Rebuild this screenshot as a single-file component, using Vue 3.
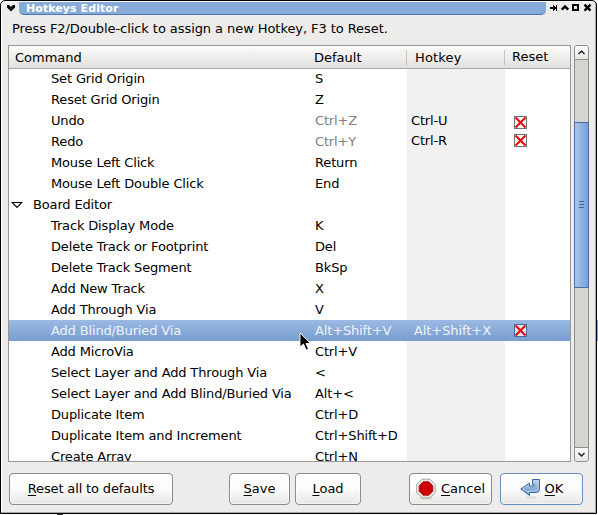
<script setup>
const rows = [
  { name: 'Set Grid Origin', def: 'S' },
  { name: 'Reset Grid Origin', def: 'Z' },
  { name: 'Undo', def: 'Ctrl+Z', key: 'Ctrl-U', changed: true, low: true },
  { name: 'Redo', def: 'Ctrl+Y', key: 'Ctrl-R', changed: true, high: true },
  { name: 'Mouse Left Click', def: 'Return' },
  { name: 'Mouse Left Double Click', def: 'End' },
  { name: 'Board Editor', group: true },
  { name: 'Track Display Mode', def: 'K' },
  { name: 'Delete Track or Footprint', def: 'Del' },
  { name: 'Delete Track Segment', def: 'BkSp' },
  { name: 'Add New Track', def: 'X' },
  { name: 'Add Through Via', def: 'V' },
  { name: 'Add Blind/Buried Via', def: 'Alt+Shift+V', key: 'Alt+Shift+X', selected: true },
  { name: 'Add MicroVia', def: 'Ctrl+V' },
  { name: 'Select Layer and Add Through Via', def: '<' },
  { name: 'Select Layer and Add Blind/Buried Via', def: 'Alt+<' },
  { name: 'Duplicate Item', def: 'Ctrl+D' },
  { name: 'Duplicate Item and Increment', def: 'Ctrl+Shift+D' },
  { name: 'Create Array', def: 'Ctrl+N' },
]
</script>

<template>
  <div class="screen">
    <div class="window">
      <header class="titlebar">
        <svg class="menu" width="18" height="14" viewBox="0 0 18 14"><path d="M6 4h2l2 2 2-2h2v2.500l-4 4-4-4z" fill="#000" /></svg>
        <h1>Hotkeys Editor</h1>
        <svg class="controls" width="50" height="14" viewBox="0 0 50 14">
          <path d="M4 5h3V3h1v1h1v1h1V3h1v6h-1V7H9v1H8v1H7V7H4z" fill="#000" />
          <path d="M15.800 7.700l3.200-3.200 3.200 3.200" fill="none" stroke="#000" stroke-width="2.400" />
          <path d="M27 3h5v5h-5z" fill="none" stroke="#000" stroke-width="2" />
          <path d="M38.500 2.700l6 6M44.500 2.700l-6 6" stroke="#000" stroke-width="2.400" />
        </svg>
      </header>

      <p class="hint">Press F2/Double-click to assign a new Hotkey, F3 to Reset.</p>

      <main class="body">
        <section class="list">
          <div class="head">
            <span class="c-name">Command</span>
            <span class="c-def">Default</span>
            <span class="c-key">Hotkey</span>
            <span class="c-reset">Reset</span>
          </div>
          <div class="rows">
            <div v-for="row in rows" :key="row.name" class="row" :class="{ selected: row.selected, group: row.group, changed: row.changed, low: row.low, high: row.high }">
              <span class="c-name">
                <svg v-if="row.group" class="arrow" width="12" height="8" viewBox="0 0 12 8"><path d="M1.200 1.500h9.600L6 6.500z" fill="#fff" stroke="#000" stroke-width="1.100" /></svg>
                <span>{{ row.name }}</span>
              </span>
              <span class="c-def">{{ row.def }}</span>
              <span class="c-key">{{ row.key }}</span>
              <span class="c-reset">
                <svg v-if="row.key" width="13" height="13" viewBox="0 0 13 13">
                  <rect class="box" x=".5" y=".5" width="12" height="12" />
                  <path d="M1.500 1.500l10 10M11.500 1.500l-10 10" stroke="#f00000" stroke-width="2" />
                </svg>
              </span>
            </div>
          </div>
        </section>

        <div class="scroll">
          <div class="step"><svg width="13" height="13" viewBox="0 0 13 13"><path d="M3.500 8l3-3 3 3" fill="none" stroke="#222" stroke-width="1.500" /></svg></div>
          <div class="track"><div class="thumb"><i /><i /><i /></div></div>
          <div class="step end"><svg width="13" height="13" viewBox="0 0 13 13"><path d="M3.500 5l3 3 3-3" fill="none" stroke="#222" stroke-width="1.500" /></svg></div>
        </div>
      </main>

      <footer class="buttons">
        <button class="b-reset"><span><u>R</u>eset all to defaults</span></button>
        <button class="b-save"><span><u>S</u>ave</span></button>
        <button class="b-load"><span><u>L</u>oad</span></button>
        <button class="b-cancel">
          <svg width="20" height="22" viewBox="0 0 20 22">
            <ellipse cx="10" cy="20.500" rx="7" ry="1.300" fill="#d8d8d8" />
            <path d="M6 1.200h8l5.300 5.300v8L14 19.800H6L.7 14.500v-8z" fill="#e9ebe7" stroke="#a5a9a2" />
            <path d="M7.200 3.700h5.600l4 4v5.600l-4 4H7.200l-4-4V7.700z" fill="#cc0000" stroke="#b00000" stroke-width=".8" stroke-linejoin="round" />
          </svg>
          <span><u>C</u>ancel</span>
        </button>
        <button class="b-ok">
          <svg width="21" height="22" viewBox="0 0 21 22">
            <defs>
              <linearGradient id="enter" x1="0" y1="0" x2="0" y2="1"><stop offset="0" stop-color="#b8d0eb" /><stop offset="1" stop-color="#6594cb" /></linearGradient>
            </defs>
            <ellipse cx="11" cy="19.500" rx="6" ry="1.500" fill="#dedede" />
            <path d="M12.500 1.500h7V11q0 3.500-3.500 3.500H9.500v3L.800 11 9.500 5v3h4.500V6.500h-1.500z" fill="url(#enter)" stroke="#3b6ba5" />
            <path d="M14 3h4v8q0 2-2 2H8.500v1.500L3 11l5.500-4" fill="none" stroke="#c8dcf2" stroke-width=".8" />
          </svg>
          <span><u>O</u>K</span>
        </button>
      </footer>

      <svg class="cursor" width="14" height="20" viewBox="0 0 14 20">
        <path d="M1 1v14l3.500-3 2.500 6 2.500-1-2.500-5.500h4.500z" fill="#000" stroke="#fff" stroke-width=".9" />
      </svg>
    </div>
    <div class="behind"><i /></div>
  </div>
</template>

<style>
body { background: #fff; overflow: hidden; }
</style>

<style scoped>
.screen {
  width: 598px;
  height: 515px;
  box-sizing: border-box;
  overflow: hidden;
  font: 13px/21px "DejaVu Sans", sans-serif;
  color: #000;
  background: linear-gradient(#fff 320px, #7ea4d8 320px, #7ea4d8 341px, #fff 341px);
}
.window {
  position: relative;
  display: flex;
  flex-direction: column;
  width: 597px;
  height: 514px;
  box-sizing: border-box;
  border: 1px solid #000;
  border-radius: 5px 5px 0 0;
  background: #edeceb;
  box-shadow: inset -1px -1px #aaa8a5, inset 1px 1px #fff;
}
.titlebar {
  display: flex;
  height: 15px;
  flex: none;
}
.menu, .controls { flex: none; }
.controls { margin-top: 1px; }
.titlebar h1 {
  flex: 1;
  margin: 1px 0 0;
  padding-left: 7px;
  height: 13px;
  box-sizing: border-box;
  border-bottom: 1px solid #4b76b3;
  border-radius: 0 0 5px 5px;
  background: #86abd9;
  color: #fff;
  font: bold 11px/13px "DejaVu Sans", sans-serif;
  letter-spacing: .07px;
}
.hint { margin: 1px 0 1px; padding-left: 11px; height: 27px; line-height: 23px; flex: none; letter-spacing: -.07px; }
.body { display: flex; gap: 3px; margin-left: 7px; height: 417px; flex: none; }
.list {
  display: flex;
  flex-direction: column;
  width: 563px;
  box-sizing: border-box;
  border: 1px solid #989794;
  background: #fff;
  overflow: hidden;
}
.head {
  display: flex;
  height: 23px;
  flex: none;
  box-sizing: border-box;
  border-bottom: 1px solid #aaa7a4;
  background: linear-gradient(#fbfbfa, #e3e1df);
  line-height: 23px;
}
.rows { flex: 1; overflow: hidden; background: linear-gradient(90deg, transparent 398px, #f1f1f1 398px, #f1f1f1 496px, transparent 496px); }
.row { display: flex; height: 21px; letter-spacing: -.15px; }
.row:first-child { margin-top: -1px; }
.c-name { width: 306px; flex: none; box-sizing: border-box; padding-left: 42px; white-space: nowrap; }
.c-def { width: 92px; flex: none; white-space: nowrap; }
.c-key { width: 98px; flex: none; box-sizing: border-box; padding-left: 7px; white-space: nowrap; }
.c-reset { flex: 1; display: flex; align-items: center; padding-left: 9px; }
.head .c-name { padding-left: 6px; }
.head .c-def { width: 92px; margin-left: -1px; }
.head .c-key, .head .c-reset {
  background: linear-gradient(#c5c3c0, #c5c3c0) 0 4px / 1px 15px no-repeat;
}
.head .c-key { padding-left: 9px; letter-spacing: .15px; }
.head .c-reset { padding-left: 8px; line-height: 21px; align-items: flex-start; }
.group .c-name { display: flex; gap: 10px; align-items: center; padding-left: 2px; }
.changed .c-def { color: #808080; }
.changed .c-key { padding-left: 4px; }
.high .c-key { line-height: 19px; }
.selected .c-key { letter-spacing: -.08px; }
.low .c-reset { padding-top: 3px; }
.high .c-reset { padding-bottom: 2px; }
.box { fill: #fff; stroke: #747474; }
.selected { background: linear-gradient(#9bb9e3, #789dcf); color: #eef3fa; }
.selected .box { fill: #dde7f5; stroke: #47699b; }
.scroll {
  display: flex;
  flex-direction: column;
  width: 15px;
  box-sizing: border-box;
  border: 1px solid #8f8e8b;
  border-radius: 3px;
  background: #d5d4d1;
}
.step { height: 14px; box-sizing: border-box; border-bottom: 1px solid #8f8e8b; border-radius: 2px 2px 0 0; background: linear-gradient(#fff, #e6e5e3); }
.step.end { border-top: 1px solid #8f8e8b; border-bottom: 0; border-radius: 0 0 2px 2px; }
.step svg { display: block; }
.track { flex: 1; padding-top: 62px; }
.thumb {
  display: flex;
  flex-direction: column;
  justify-content: center;
  align-items: center;
  gap: 2px;
  height: 166px;
  margin: 0 -1px;
  padding-bottom: 2px;
  box-sizing: border-box;
  border: 1px solid #4b6fa3;
  background: linear-gradient(90deg, #a9c5eb, #7aa0d4);
}
.thumb i { width: 5px; height: 1px; background: #3b629b; }
.buttons { display: flex; padding: 11px 0 0 7px; height: 32px; }
button {
  display: flex;
  align-items: center;
  justify-content: center;
  flex: none;
  height: 32px;
  box-sizing: border-box;
  padding: 0;
  border: 1px solid #8d8c89;
  border-radius: 4px;
  background: linear-gradient(#fff, #fcfcfc 50%, #e7e6e5);
  box-shadow: inset 0 0 0 1px #fff8;
  color: #000;
  font: inherit;
}
button span { padding-bottom: 2px; }
u { text-underline-offset: 2px; text-decoration-thickness: 1px; }
.b-reset { width: 164px; margin-left: 1px; letter-spacing: -.14px; }
.b-save { width: 61px; margin-left: 56px; }
.b-load { width: 66px; margin-left: 5px; }
.b-cancel { width: 83px; margin-left: 48px; gap: 5px; }
.b-ok { width: 83px; margin-left: 8px; gap: 4px; border-color: #6b8fc0; }
.cursor { position: absolute; left: 298px; top: 331px; }
.behind { height: 1px; background: #fff; padding-left: 57px; }
.behind i { display: block; width: 6px; height: 1px; background: #333; }
</style>
